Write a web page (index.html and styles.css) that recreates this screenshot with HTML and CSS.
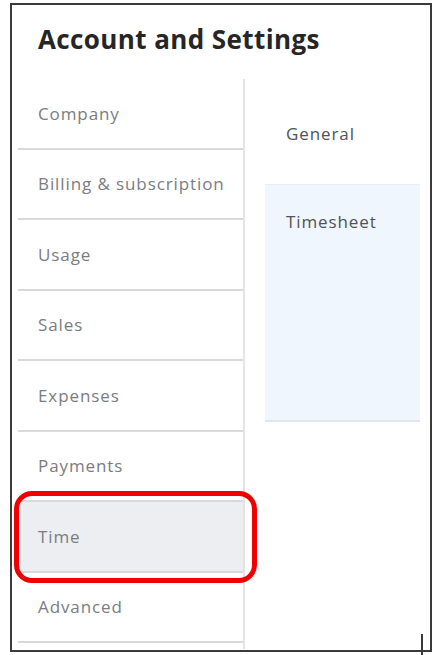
FILE: index.html
```html
<!DOCTYPE html>
<html lang="en">
<head>
<meta charset="utf-8">
<title>Account and Settings</title>
<link rel="stylesheet" href="styles.css">
</head>
<body>
<div class="frame">
  <h1 class="title">Account and Settings</h1>
  <div class="content">
    <nav class="sidebar">
      <div class="nav-item">Company</div>
      <div class="nav-item">Billing &amp; subscription</div>
      <div class="nav-item">Usage</div>
      <div class="nav-item">Sales</div>
      <div class="nav-item">Expenses</div>
      <div class="nav-item">Payments</div>
      <div class="nav-item active">Time</div>
      <div class="nav-item">Advanced</div>
    </nav>
    <div class="main">
      <div class="tabs">
        <div class="tab">General</div>
        <div class="tab selected">Timesheet</div>
      </div>
    </div>
  </div>
  <span class="cursor"></span>
</div>
</body>
</html>
```
FILE: styles.css
```css
html, body {
  margin: 0;
  padding: 0;
  background: #ffffff;
}
body {
  font-family: "Open Sans", Lato, sans-serif;
  width: 436px;
  height: 655px;
  overflow: hidden;
}
.frame {
  position: relative;
  box-sizing: border-box;
  margin: 3px 0 0 10px;
  width: 422px;
  height: 649px;
  border: 2px solid #3a3a3a;
  background: #fff;
}
.title {
  margin: 0;
  box-sizing: border-box;
  height: 74px;
  padding: 18px 0 0 26px;
  font-family: "Open Sans", sans-serif;
  font-weight: 700;
  font-size: 26px;
  line-height: 32px;
  color: #262626;
  letter-spacing: 0.4px;
}
.content {
  display: flex;
  padding-left: 6px;
  height: 570px;
}
.sidebar {
  width: 225px;
  border-right: 2px solid #e4e4e4;
  display: flex;
  flex-direction: column;
}
.nav-item {
  position: relative;
  box-sizing: border-box;
  height: 70.5px;
  flex: none;
  display: flex;
  align-items: center;
  padding-left: 20px;
  border-bottom: 2px solid #d9d9d9;
  font-size: 17px;
  color: #7a7c81;
  letter-spacing: 0.9px;
  white-space: nowrap;
}
.nav-item.active {
  background: #eceef1;
}
.nav-item.active::after {
  content: "";
  position: absolute;
  top: -11px;
  bottom: -12px;
  left: -4px;
  right: -14px;
  border: 5px solid #f00000;
  border-radius: 18px;
  z-index: 2;
}
.main {
  flex: 1;
  padding: 18px 10px 0 20px;
}
.tabs {
  display: flex;
  flex-direction: column;
}
.tab {
  box-sizing: border-box;
  padding: 28px 0 0 21px;
  font-size: 17px;
  line-height: 18px;
  color: #505257;
  letter-spacing: 0.9px;
}
.tab:first-child {
  height: 87px;
}
.tab.selected {
  height: 238px;
  background: #f0f6fd;
  border-top: 1px solid #e6eef7;
  border-bottom: 2px solid #dfe8f1;
}
.cursor {
  position: absolute;
  left: 409px;
  bottom: -5px;
  width: 2px;
  height: 21px;
  background: #3a3a3a;
}
```
